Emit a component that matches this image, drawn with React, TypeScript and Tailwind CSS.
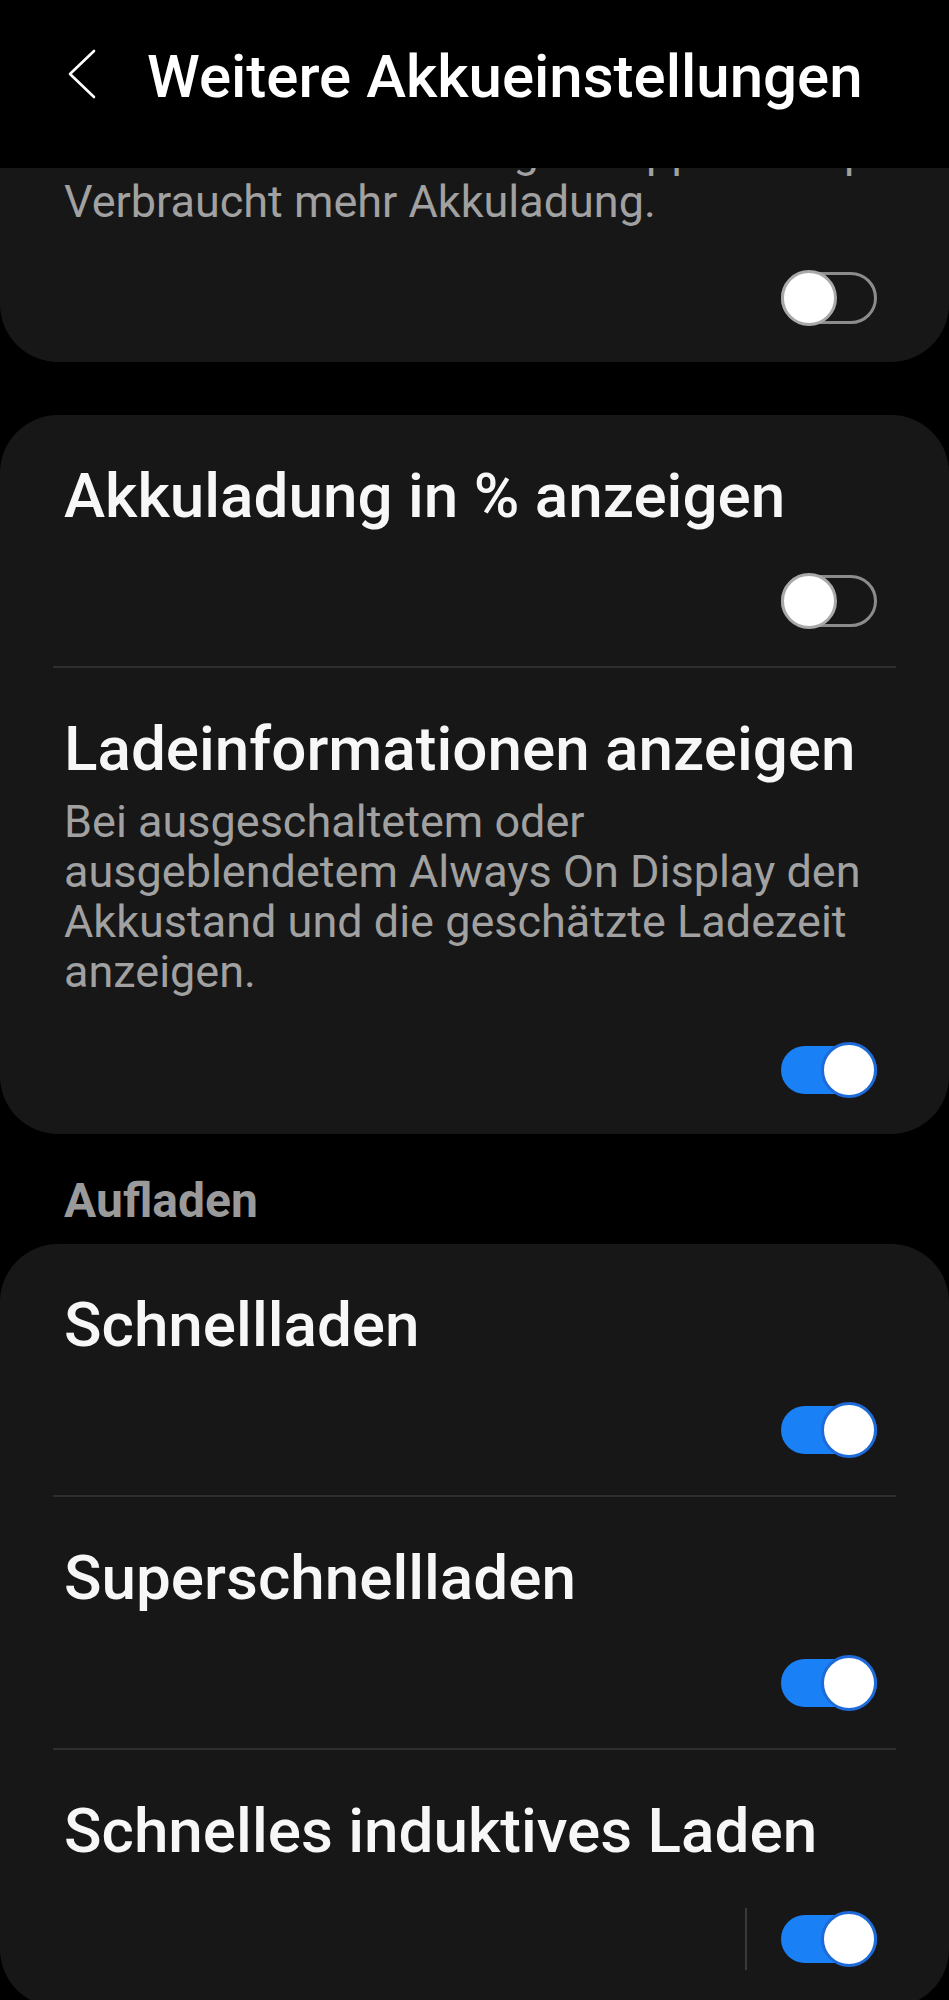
import React from 'react';

interface SettingRowProps {
    title: string;
    lines?: string[];
    on: boolean;
    split?: boolean;
}

function Toggle({ on }: { on: boolean }) {
    return (
        <div className="relative flex h-[56px] w-[96px] shrink-0 items-center">
            {on ? (
                <div className="h-[48px] w-full rounded-full bg-[#1a80f6]" />
            ) : (
                <div className="h-[52px] w-full rounded-full border-[3px] border-[#8c8c8c]" />
            )}
            {/* Thumb */}
            <div
                className={`absolute top-0 h-[56px] w-[56px] rounded-full bg-white ${
                    on ? 'right-0 border-[3px] border-[#1d6ad8]' : 'left-0 border-[3px] border-[#a9a9a9]'
                }`}
            />
        </div>
    );
}

function SettingRow({ title, lines, on, split }: SettingRowProps) {
    return (
        <div className={`pl-[64px] pr-[72px] pt-[45px] ${lines ? 'pb-[36px]' : 'pb-[37px]'}`}>
            <div className="whitespace-nowrap text-[62px] font-medium leading-[72px] text-[#f7f7f7]">{title}</div>
            {lines && (
                <div className="mt-[12px] text-[45px] leading-[50px] text-[#a1a1a1]">
                    {lines.map((line) => (
                        <div key={line} className="whitespace-nowrap">
                            {line}
                        </div>
                    ))}
                </div>
            )}
            <div className={`flex items-center justify-end gap-[34px] ${lines ? 'mt-[45px]' : 'mt-[41px]'}`}>
                {split && <div className="h-[62px] w-[2px] bg-[#3a3a3a]" />}
                <Toggle on={on} />
            </div>
        </div>
    );
}

function Divider() {
    return <div className="mx-[53px] h-[2px] bg-[#2e2e2e]" />;
}

export default function App() {
    return (
        <div className="min-h-screen w-full bg-black pb-[40px] font-[Roboto,sans-serif]">
            {/* Header */}
            <div className="flex h-[168px] items-center pb-[15px] pl-[68px]">
                <svg width="28" height="50" viewBox="0 0 28 50" fill="none" className="mb-[6px] shrink-0">
                    <path d="M26 2 L2 25 L26 48" stroke="#ffffff" strokeWidth="2.6" strokeLinecap="round" strokeLinejoin="round" />
                </svg>
                <h1 className="ml-[51px] whitespace-nowrap text-[60px] font-medium leading-[72px] text-white">
                    Weitere Akkueinstellungen
                </h1>
            </div>

            {/* Scrolled card, top part hidden under header */}
            <div className="h-[194px] overflow-hidden rounded-b-[58px] bg-[#171717] pl-[64px] pr-[72px]">
                <div className="-mt-[41px] text-[45px] leading-[50px] text-[#a1a1a1]">
                    <div className="whitespace-nowrap">Schnellere Verarbeitung für Apps und Spiele.</div>
                    <div className="whitespace-nowrap">Verbraucht mehr Akkuladung.</div>
                </div>
                <div className="mt-[43px] flex justify-end">
                    <Toggle on={false} />
                </div>
            </div>

            <div className="mt-[53px] overflow-hidden rounded-[58px] bg-[#171717]">
                <SettingRow title="Akkuladung in % anzeigen" on={false} />
                <Divider />
                <SettingRow
                    title="Ladeinformationen anzeigen"
                    lines={[
                        'Bei ausgeschaltetem oder',
                        'ausgeblendetem Always On Display den',
                        'Akkustand und die geschätzte Ladezeit',
                        'anzeigen.',
                    ]}
                    on
                />
            </div>

            <div className="mt-[39px] pl-[64px] text-[48px] font-bold leading-[56px] text-[#9a9a9a]">Aufladen</div>

            <div className="mt-[15px] overflow-hidden rounded-[58px] bg-[#171717]">
                <SettingRow title="Schnellladen" on />
                <Divider />
                <SettingRow title="Superschnellladen" on />
                <Divider />
                <SettingRow title="Schnelles induktives Laden" on split />
            </div>
        </div>
    );
}
